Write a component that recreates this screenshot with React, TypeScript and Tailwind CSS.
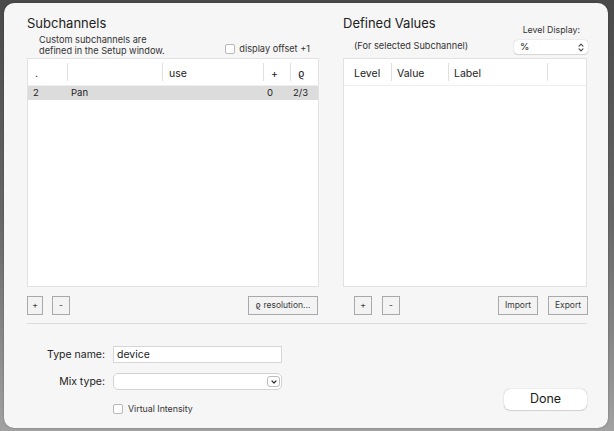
import React from "react";

const font = { fontFamily: "Inter, 'Noto Sans', sans-serif" };

function Checkbox() {
  return <span className="inline-block w-[10px] h-[10px] bg-white border border-[#b8b8b8] rounded-[2px] shrink-0" />;
}

function SmallButton({ label, width }: { label: string; width: string }) {
  return (
    <button
      className={`${width} h-[19px] flex items-center justify-center border border-[#a9a9a9] bg-[#f3f3f3] text-[8.5px] text-[#3a3a3a] leading-none`}
    >
      {label}
    </button>
  );
}

function Sep() {
  return <span className="w-px h-[18px] bg-[#e0e0e0] self-center shrink-0" />;
}

function UpDown() {
  return (
    <svg width="6" height="9" viewBox="0 0 6 9" fill="none" stroke="#444" strokeWidth="1.1" strokeLinecap="round" strokeLinejoin="round">
      <path d="M1 3.2 L3 1.2 L5 3.2" />
      <path d="M1 5.8 L3 7.8 L5 5.8" />
    </svg>
  );
}

function ChevronDown() {
  return (
    <svg width="6" height="4" viewBox="0 0 6 4" fill="none" stroke="#333" strokeWidth="1.2" strokeLinecap="round" strokeLinejoin="round">
      <path d="M1 1 L3 3 L5 1" />
    </svg>
  );
}

export default function App() {
  return (
    <div
      className="w-[614px] h-[431px] bg-gradient-to-b from-[#4a4a4a] via-[#666666] to-[#a2a2a2] pt-[3px] pl-[4px] pr-[6px] pb-[3px]"
      style={font}
    >
      <div className="h-full rounded-[10px] bg-[#f6f6f6] shadow-[0_0_2px_rgba(0,0,0,0.35)] pl-[23px] pr-[21px] pt-[10px] flex flex-col text-[#222]">
        <div className="flex gap-[24px]">
          {/* Subchannels */}
          <div className="w-[292px] flex flex-col">
            <div className="h-[20px] text-[13px] leading-[20px]">Subchannels</div>
            <div className="h-[25px] flex items-start justify-between pl-[12px] pt-[1px] text-[9.2px] leading-[11px] text-[#333]">
              <div>
                Custom subchannels are
                <br />
                defined in the Setup window.
              </div>
              <div className="flex items-center gap-[4px] mt-[9px] mr-[9px]">
                <Checkbox />
                <span>display offset +1</span>
              </div>
            </div>
            <div className="h-[229px] bg-white border border-[#e2e2e2]">
              <div className="h-[27px] flex text-[10.5px] text-[#222] border-b border-[#eeeeee]">
                <span className="w-[39px] pl-[7px] self-center mt-[4px]">.</span>
                <Sep />
                <span className="w-[94px]" />
                <Sep />
                <span className="w-[100px] pl-[6px] self-center mt-[4px]">use</span>
                <Sep />
                <span className="w-[26px] pl-[7px] self-center mt-[4px]">+</span>
                <Sep />
                <span className="flex-1 pl-[7px] self-center mt-[4px]">ϱ</span>
              </div>
              <div className="h-[14px] flex items-center bg-[#dcdcdc] text-[9.5px] text-[#222]">
                <span className="w-[40px] pl-[5px]">2</span>
                <span className="w-[95px] pl-[3px]">Pan</span>
                <span className="w-[101px]" />
                <span className="w-[27px] pl-[3px]">0</span>
                <span className="flex-1 pl-[2px]">2/3</span>
              </div>
            </div>
            <div className="mt-[9px] flex items-center">
              <SmallButton label="+" width="w-[16px]" />
              <div className="ml-[9px]">
                <SmallButton label="-" width="w-[18px]" />
              </div>
              <div className="ml-auto mr-[1px]">
                <SmallButton label="ϱ resolution..." width="w-[70px]" />
              </div>
            </div>
          </div>

          {/* Defined Values */}
          <div className="w-[244px] flex flex-col">
            <div className="h-[45px] flex justify-between">
              <div className="flex flex-col">
                <div className="h-[20px] text-[13px] leading-[20px]">Defined Values</div>
                <div className="pl-[11px] mt-[7px] text-[9.2px] leading-[11px] text-[#333]">(For selected Subchannel)</div>
              </div>
              <div className="flex flex-col items-end pt-[11px]">
                <div className="text-[8.8px] leading-[11px] text-[#333] mr-[7px]">Level Display:</div>
                <div className="mt-[5px] w-[74px] h-[14px] -mr-[1px] bg-white rounded-[4px] shadow-[0_0_1px_rgba(0,0,0,0.35),0_1px_1px_rgba(0,0,0,0.1)] flex items-center justify-between pl-[6px] pr-[4px] text-[9.5px]">
                  <span>%</span>
                  <UpDown />
                </div>
              </div>
            </div>
            <div className="h-[229px] bg-white border border-[#e2e2e2]">
              <div className="h-[27px] flex text-[10.5px] text-[#222] border-b border-[#eeeeee]">
                <span className="w-[47px] pl-[10px] self-center mt-[4px]">Level</span>
                <Sep />
                <span className="w-[56px] pl-[5px] self-center mt-[4px]">Value</span>
                <Sep />
                <span className="w-[98px] pl-[5px] self-center mt-[4px]">Label</span>
                <Sep />
                <span className="flex-1" />
              </div>
            </div>
            <div className="mt-[9px] flex items-center">
              <div className="ml-[11px]">
                <SmallButton label="+" width="w-[18px]" />
              </div>
              <div className="ml-[10px]">
                <SmallButton label="-" width="w-[18px]" />
              </div>
              <div className="ml-auto">
                <SmallButton label="Import" width="w-[40px]" />
              </div>
              <div className="ml-[10px] -mr-[1px]">
                <SmallButton label="Export" width="w-[40px]" />
              </div>
            </div>
          </div>
        </div>

        <div className="mt-[8px] h-px bg-[#dcdcdc]" />

        <div className="flex items-start">
          <div className="mt-[22px] grid grid-cols-[78px_169px] gap-x-[8px] items-center text-[10.5px]">
            <span className="text-right">Type name:</span>
            <div className="h-[17px] bg-white border border-[#d6d6d6] flex items-center pl-[3px] text-[10.5px]">device</div>
            <span className="text-right mt-[10px]">Mix type:</span>
            <div className="mt-[10px] h-[17px] bg-white rounded-[5px] border border-[#d3d3d3] flex items-center justify-end pr-[1px]">
              <span className="w-[13px] h-[11px] bg-white border border-[#bdbdbd] rounded-[3px] flex items-center justify-center">
                <ChevronDown />
              </span>
            </div>
            <span />
            <div className="mt-[12px] flex items-center gap-[5px] text-[8.8px] text-[#333]">
              <Checkbox />
              <span>Virtual Intensity</span>
            </div>
          </div>
          <button className="ml-auto mt-[65px] w-[83px] h-[21px] bg-white rounded-[6px] shadow-[0_0_1px_rgba(0,0,0,0.4),0_1px_1px_rgba(0,0,0,0.12)] text-[12.5px] text-[#1a1a1a] leading-none">
            Done
          </button>
        </div>
      </div>
    </div>
  );
}
